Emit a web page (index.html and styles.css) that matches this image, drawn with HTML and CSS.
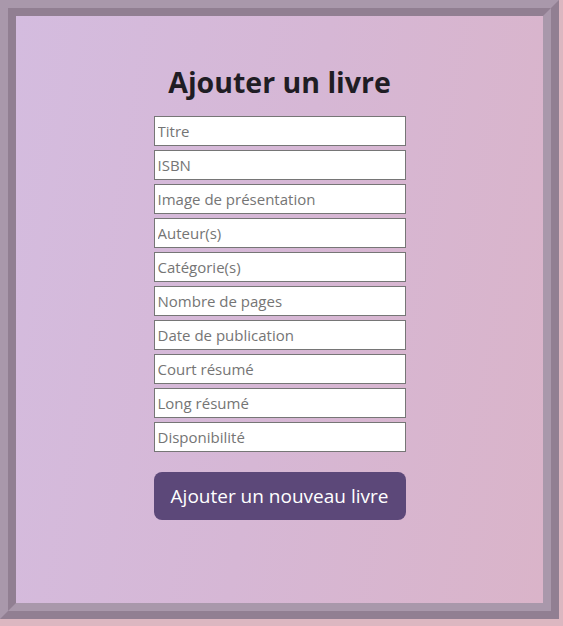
FILE: index.html
```html
<!DOCTYPE html>
<html lang="fr">
<head>
<meta charset="utf-8">
<title>Ajouter un livre</title>
<link rel="stylesheet" href="styles.css">
</head>
<body>
<div class="frame">
  <div class="panel">
    <form class="book-form">
      <h1 class="title">Ajouter un livre</h1>
      <div class="fields">
        <input class="field" type="text" placeholder="Titre">
        <input class="field" type="text" placeholder="ISBN">
        <input class="field" type="text" placeholder="Image de présentation">
        <input class="field" type="text" placeholder="Auteur(s)">
        <input class="field" type="text" placeholder="Catégorie(s)">
        <input class="field" type="text" placeholder="Nombre de pages">
        <input class="field" type="text" placeholder="Date de publication">
        <input class="field" type="text" placeholder="Court résumé">
        <input class="field" type="text" placeholder="Long résumé">
        <input class="field" type="text" placeholder="Disponibilité">
      </div>
      <button class="submit" type="button">Ajouter un nouveau livre</button>
    </form>
  </div>
</div>
</body>
</html>
```

FILE: styles.css
```css
html {
  background: #dcb7c1;
}
body {
  margin: 0;
  font-family: "Open Sans", "Noto Sans", sans-serif;
}
.frame {
  box-sizing: border-box;
  width: 559px;
  height: 619px;
  border: 8px solid;
  border-color: #a998ab #917f92 #917f92 #a998ab;
}
.panel {
  box-sizing: border-box;
  height: 100%;
  border: 8px solid;
  border-color: #917f92 #a998ab #a998ab #917f92;
  background: linear-gradient(100deg, #d4bcdf 0%, #d6b7d5 50%, #dab4c9 100%);
  padding-top: 47px;
  display: flex;
  justify-content: center;
}
.book-form {
  width: 252px;
  display: flex;
  flex-direction: column;
  align-items: stretch;
}
.title {
  margin: 0 -40px 15px;
  font-size: 28.5px;
  line-height: 38px;
  font-weight: 700;
  color: #1f1d24;
  text-align: center;
}
.fields {
  display: flex;
  flex-direction: column;
  gap: 4px;
}
.field {
  box-sizing: border-box;
  height: 30px;
  margin: 0;
  padding: 0 3px;
  border: 1px solid #767676;
  border-radius: 0;
  background: #fff;
  font-family: "Open Sans", "Noto Sans", sans-serif;
  font-size: 15px;
  color: #222;
}
.field::placeholder {
  color: #757575;
  opacity: 1;
}
.submit {
  margin-top: 20px;
  height: 48px;
  border: 0;
  border-radius: 8px;
  background: #5c4879;
  color: #fff;
  font-family: "Open Sans", "Noto Sans", sans-serif;
  font-size: 19px;
  cursor: pointer;
}
```
